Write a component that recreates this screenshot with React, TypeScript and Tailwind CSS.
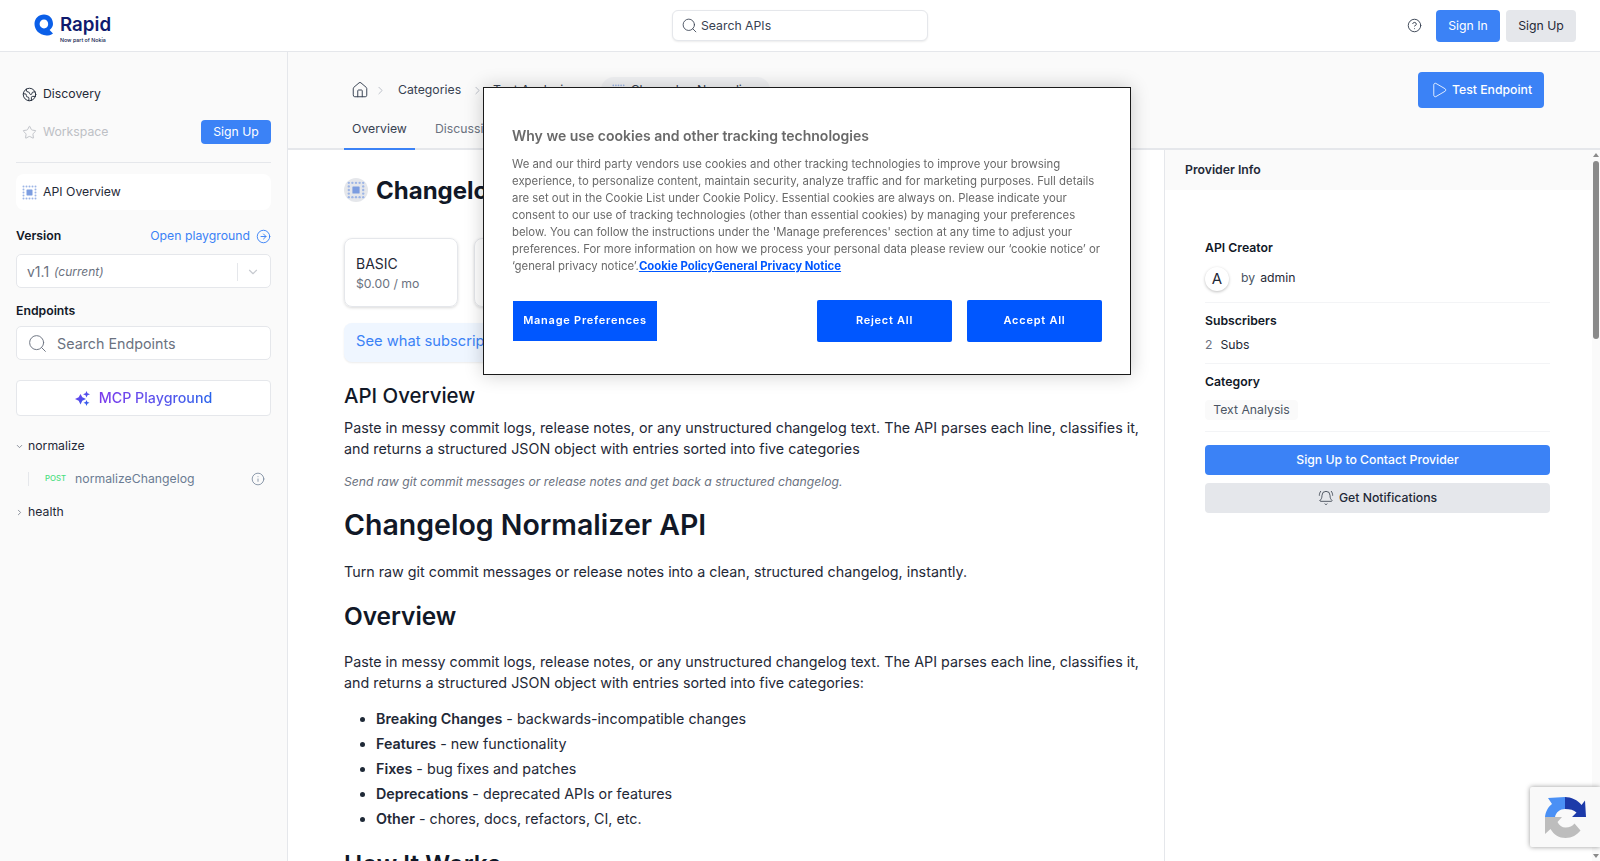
import { BellRing, ChevronDown, ChevronRight, CircleArrowRight, CircleHelp, Earth, House, Info, Play, Search, Star } from "lucide-react";

function ApiIcon({ size = 14 }: { size?: number }) {
  const dots = [2, 6, 10, 14, 18];
  return (
    <svg width={size} height={size} viewBox="0 0 20 20" fill="#9db5e6">
      {dots.map((x) =>
        dots.map((y) =>
          x === 2 || x === 18 || y === 2 || y === 18 ? <circle key={`${x}-${y}`} cx={x} cy={y} r="1.3" /> : null
        )
      )}
      <rect x="6" y="6" width="8" height="8" rx="0.6" fill="#7c9de0" />
    </svg>
  );
}

function Logo() {
  return (
    <div className="flex flex-col items-start pt-[7px]">
      <div className="flex items-center gap-[6px]">
        <svg width="20" height="22" viewBox="0 0 20 22">
          <path d="M10 0.5C4.6 0.5 0.5 4.6 0.5 10c0 5.6 4.4 11 12 11.5 1.6 0 4.6-.3 6.5-2l-3.4-3.4c2-1.7 3.4-3.8 3.4-6.1C19 4.6 15.4 0.5 10 0.5Zm0 5c2.4 0 4.2 2 4.2 4.5S12.4 14.4 10 14.4 5.6 12.4 5.6 10 7.6 5.5 10 5.5Z" fill="#0b5fe8" />
        </svg>
        <span className="text-[18.7px] leading-[22px] font-semibold text-[#0f1a6e]">Rapid</span>
      </div>
      <span className="ml-[26px] mt-[1px] text-[5.3px] leading-[7px] font-medium text-[#0f1a4e] whitespace-nowrap">Now part of Nokia</span>
    </div>
  );
}

function Recaptcha() {
  return (
    <svg width="41" height="41" viewBox="0 0 41 41">
      <path d="M0 20C0.5 15 3 10 7 7L3 1L20 0V12C15 12 11 15 10 20Z" fill="#4a90f5" />
      <path d="M20 0C26 0 33 3 36.5 8L40 3.5L41 20H27L31.5 15.5C29 13 25 12 20 12Z" fill="#1c3aa9" />
      <path d="M0 20V37L5.5 32C9 38 14 41 20.5 41C27 41 32 38 35.5 33.5L29.5 26.5C27.5 29 24.5 30.5 20.5 30.5C17 30.5 14 28.5 12.5 25L17 20Z" fill="#bdbdbd" />
    </svg>
  );
}

function Sidebar() {
  return (
    <aside className="w-[288px] shrink-0 bg-[#fafafa] border-r border-[#e5e7eb] px-4 pt-6 text-[12.25px] text-[#1f2937]">
      <div className="flex h-9 items-center gap-[6px] pl-[6px]">
        <Earth size={15} strokeWidth={1.5} />
        <span>Discovery</span>
      </div>
      <div className="mt-[2px] flex h-9 items-center gap-[6px] pl-[6px] text-[#bdc0c5]">
        <Star size={15} strokeWidth={1.5} />
        <span>Workspace</span>
        <button className="ml-auto h-6 w-[70px] rounded-[4px] bg-[#3b82f6] text-white">Sign Up</button>
      </div>
      <div className="mt-3 border-b border-[#e5e7eb]" />
      <div className="mt-[11px] flex h-9 items-center gap-[6px] rounded-lg bg-white pl-[6px]">
        <ApiIcon size={15} />
        <span>API Overview</span>
      </div>
      <div className="mt-4 flex h-5 items-center justify-between">
        <span className="font-semibold text-[#111827]">Version</span>
        <span className="flex items-center gap-[6px] text-[#3b82f6]">
          Open playground
          <CircleArrowRight size={15} strokeWidth={1.5} />
        </span>
      </div>
      <div className="mt-2 flex h-[34px] items-center rounded-[5px] border border-[#e5e7eb] bg-white pl-[10px] pr-[10px] pt-[1px] text-[#6b7280]">
        <span className="text-[14px]">v1.1</span>
        <span className="ml-[5px] text-[12px] italic">(current)</span>
        <span className="ml-auto h-[18px] border-l border-[#e5e7eb]" />
        <ChevronDown size={14} className="ml-[8px] text-[#c7cad0]" />
      </div>
      <div className="mt-[13px] flex h-5 items-center font-semibold text-[#111827]">Endpoints</div>
      <div className="mt-[5px] flex h-[34px] items-center gap-[9px] rounded-[5px] border border-[#e5e7eb] bg-white pl-[10px] text-[14.3px] text-[#6b7280]">
        <Search size={21} strokeWidth={1.1} />
        <span className="pt-[1px]">Search Endpoints</span>
      </div>
      <div className="mt-5 flex h-9 items-center justify-center gap-[9px] rounded-[4px] border border-[#e5e7eb] bg-white text-[14.25px] font-medium">
        <svg width="15" height="15" viewBox="0 0 15 15">
          <defs>
            <linearGradient id="mcp" x1="0" y1="0" x2="1" y2="1">
              <stop offset="0" stopColor="#7c3aed" />
              <stop offset="1" stopColor="#2563eb" />
            </linearGradient>
          </defs>
          <path d="M5.5 3 7.3 6.2 11 8 7.3 9.8 5.5 13.5 3.7 9.8 0 8 3.7 6.2ZM11.5 0l1 2.2 2.5 1-2.5 1-1 2.2-1-2.2L8 3.2l2.5-1ZM11.5 9l.9 1.9 2.1.9-2.1.9-.9 2.3-.9-2.3-2.1-.9 2.1-.9Z" fill="url(#mcp)" />
        </svg>
        <span className="bg-gradient-to-r from-[#7c3aed] to-[#2563eb] bg-clip-text text-transparent">MCP Playground</span>
      </div>
      <div className="mt-5 flex h-5 items-center gap-[4px]">
        <ChevronDown size={9} className="-ml-[1px] text-[#6b7280]" />
        <span>normalize</span>
      </div>
      <div className="ml-[12px] mt-[11px] flex h-6 items-center pr-[6px]">
        <span className="h-[14px] border-l border-[#e5e7eb]" />
        <span className="ml-[16px] text-[7.8px] font-medium text-[#4ade80]">POST</span>
        <span className="ml-[9px] text-[#6b7c93]">normalizeChangelog</span>
        <Info size={14} strokeWidth={1.3} className="ml-auto text-[#6b7c93]" />
      </div>
      <div className="mt-[11px] flex h-5 items-center gap-[4px]">
        <ChevronRight size={9} className="-ml-[1px] text-[#6b7280]" />
        <span>health</span>
      </div>
    </aside>
  );
}

function SubHeader() {
  return (
    <div className="relative h-[98px] shrink-0 border-b-2 border-[#e5e7eb] bg-[#fafafa] pl-14 pr-[56px]">
      <div className="flex h-[76px] items-start justify-between">
        <div className="mt-[20px] flex h-[36px] items-center text-[12.25px] text-[#374151]">
          <House size={18} strokeWidth={1.3} className="ml-[7px]" />
          <ChevronRight size={13} strokeWidth={1.2} className="ml-[5px] text-[#9ca3af]" />
          <span className="ml-[11px] pt-[1px]">Categories</span>
          <ChevronRight size={13} strokeWidth={1.2} className="ml-[10px] text-[#9ca3af]" />
          <span className="ml-[9px] pt-[1px]">Text Analysis</span>
          <span className="ml-[31px] flex h-[26px] w-[169px] items-center gap-[6px] rounded-full bg-[#f1f2f4] pl-[11px]">
            <ApiIcon size={13} />
            Changelog Normalizer
          </span>
        </div>
        <button className="mt-[20px] flex h-9 w-[126px] items-center justify-center gap-[4px] rounded-[4px] bg-[#3b82f6] text-[12.25px] font-medium text-white">
          <Play size={18} strokeWidth={1.1} />
          Test Endpoint
        </button>
      </div>
      <div className="absolute bottom-0 left-14 flex items-end text-[12.25px]">
        <span className="-mb-[2px] flex h-[34px] w-[71px] items-center justify-center border-b-2 border-[#3b82f6] pb-[5px] text-[#374151]">Overview</span>
        <span className="ml-[20px] flex h-[34px] items-center pb-[3px] text-[#6b7280]">Discussions</span>
      </div>
    </div>
  );
}

function Content() {
  return (
    <main className="flex-1 overflow-hidden bg-white pl-14 pr-[20px] text-[14.3px] leading-[21px] text-[#1f2937]">
      <div className="mt-[28px] flex h-6 items-center gap-[8px]">
        <span className="flex h-6 w-6 items-center justify-center rounded-full bg-[#e5e7eb]">
          <ApiIcon size={18} />
        </span>
        <h2 className="text-[24px] font-bold text-[#111827]">Changelog Normalizer</h2>
      </div>
      <div className="mt-[36px] flex gap-4">
        <div className="flex h-[69px] w-[114px] flex-col justify-center rounded-lg border border-[#e5e7eb] pl-[11px] pt-[3px] shadow-[0_1px_3px_rgba(0,0,0,0.15)]">
          <span className="text-[14px] leading-[20px] text-[#1f2937]">BASIC</span>
          <span className="text-[12.25px] leading-[20px] text-[#6b7280]">$0.00 / mo</span>
        </div>
        <div className="flex h-[69px] w-[114px] flex-col justify-center rounded-lg border border-[#e5e7eb] pl-[11px] shadow-[0_1px_3px_rgba(0,0,0,0.15)]">
          <span className="text-[14px] leading-[20px]">PRO</span>
        </div>
      </div>
      <div className="mt-4 flex h-[39px] w-[600px] items-center rounded-lg bg-[#eff6ff] pb-[2px] pl-[12px] text-[14.7px] text-[#3b82f6] shadow-[0_1px_2px_rgba(0,0,0,0.08)]">
        See what subscription plans include
      </div>
      <h3 className="mt-[21px] text-[20.4px] leading-[26px] font-medium text-[#111827]">API Overview</h3>
      <p className="mt-[8px]">
        Paste in messy commit logs, release notes, or any unstructured changelog text. The API parses each line, classifies it, and returns a structured JSON object with entries sorted into five categories
      </p>
      <p className="mt-[13px] text-[12.2px] leading-[20px] italic text-[#6b7280]">Send raw git commit messages or release notes and get back a structured changelog.</p>
      <h1 className="mt-[14px] text-[28.5px] leading-[38px] font-semibold text-[#111827]">Changelog Normalizer API</h1>
      <p className="mt-[17px]">Turn raw git commit messages or release notes into a clean, structured changelog, instantly.</p>
      <h2 className="mt-[18px] text-[24.4px] leading-[32px] font-semibold text-[#111827]">Overview</h2>
      <p className="mt-[19px]">
        Paste in messy commit logs, release notes, or any unstructured changelog text. The API parses each line, classifies it, and returns a structured JSON object with entries sorted into five categories:
      </p>
      <ul className="mt-[15px] list-disc pl-[32px]">
        <li className="mb-[4px]"><strong className="font-semibold">Breaking Changes</strong> - backwards-incompatible changes</li>
        <li className="mb-[4px]"><strong className="font-semibold">Features</strong> - new functionality</li>
        <li className="mb-[4px]"><strong className="font-semibold">Fixes</strong> - bug fixes and patches</li>
        <li className="mb-[4px]"><strong className="font-semibold">Deprecations</strong> - deprecated APIs or features</li>
        <li><strong className="font-semibold">Other</strong> - chores, docs, refactors, CI, etc.</li>
      </ul>
      <h2 className="mt-[19px] text-[24.4px] leading-[32px] font-semibold text-[#111827]">How It Works</h2>
    </main>
  );
}

function ProviderPanel() {
  return (
    <aside className="relative flex w-[436px] shrink-0 border-l border-[#e5e7eb] bg-white text-[12.25px] text-[#1f2937]">
      <div className="flex-1">
        <div className="flex h-10 items-center bg-[#fafafa] pl-[20px] font-semibold">Provider Info</div>
        <div className="pl-[40px] pr-[42px]">
          <div className="mt-[48px] flex h-5 items-center font-semibold text-[#111827]">API Creator</div>
          <div className="mt-[9px] flex h-6 items-center">
            <span className="flex h-6 w-6 items-center justify-center rounded-full bg-white text-[15px] shadow-[0_1px_3px_rgba(0,0,0,0.25)]">A</span>
            <span className="ml-3 pb-[1px] text-[#4b5563]">by</span>
            <span className="ml-[5px] pb-[1px]">admin</span>
          </div>
          <div className="mt-[11px] border-b border-[#f3f4f6]" />
          <div className="mt-2 flex h-5 items-center font-semibold text-[#111827]">Subscribers</div>
          <div className="mt-[4px] flex h-5 items-center">
            <span className="text-[#6b7280]">2</span>
            <span className="ml-[8px]">Subs</span>
          </div>
          <div className="mt-2 border-b border-[#f3f4f6]" />
          <div className="mt-2 flex h-5 items-center font-semibold text-[#111827]">Category</div>
          <div className="mt-2 flex h-5 w-[93px] items-center justify-center rounded-[4px] bg-[#fafafa] text-[#4b5563]">Text Analysis</div>
          <div className="mt-[11px] border-b border-[#f3f4f6]" />
          <button className="mt-[13px] flex h-[30px] w-full items-center justify-center rounded-[4px] bg-[#3b82f6] font-medium text-white">Sign Up to Contact Provider</button>
          <button className="mt-2 flex h-[30px] w-full items-center justify-center gap-[5px] rounded-[4px] bg-[#e5e7eb] font-medium">
            <BellRing size={16} strokeWidth={1.1} />
            Get Notifications
          </button>
        </div>
      </div>
      <div className="flex w-[8px] shrink-0 flex-col items-center bg-[#fafafa] pt-[3px] pb-[3px]">
        <span className="h-0 w-0 border-x-[3px] border-b-[4px] border-x-transparent border-b-[#8a8a8a]" />
        <span className="mt-[4px] h-[178px] w-[6px] rounded-full bg-[#8a8a8a]" />
        <span className="mt-auto h-0 w-0 border-x-[3px] border-t-[4px] border-x-transparent border-t-[#8a8a8a]" />
      </div>
    </aside>
  );
}

function CookieModal() {
  return (
    <div className="fixed left-[483px] top-[87px] h-[288px] w-[648px] border border-[#1a1a1a] bg-white px-[28px] text-[#696969] shadow-[0_0_18px_rgba(0,0,0,0.2)]">
      <h2 className="mt-[38px] text-[14px] leading-[20px] font-semibold">Why we use cookies and other tracking technologies</h2>
      <p className="mt-[10px] text-[11.38px] leading-[17px]">
        We and our third party vendors use cookies and other tracking technologies to improve your browsing experience, to personalize content, maintain security, analyze traffic and for marketing purposes. Full details are set out in the Cookie List under Cookie Policy. Essential cookies are always on. Please indicate your consent to our use of tracking technologies (other than essential cookies) by managing your preferences below. You can follow the instructions under the 'Manage preferences' section at any time to adjust your preferences. For more information on how we process your personal data please review our ‘cookie notice’ or ‘general privacy notice’.
        <span className="font-bold text-[#0057ff] underline">Cookie Policy</span>
        <span className="font-bold text-[#0057ff] underline">General Privacy Notice</span>
      </p>
      <div className="mt-[25px] flex items-center text-[11px] font-semibold tracking-[0.75px] text-white">
        <button className="ml-[1px] h-10 w-[144px] bg-[#0057ff] pb-[2px]">Manage Preferences</button>
        <button className="ml-auto h-[42px] w-[135px] rounded-[2px] bg-[#0057ff] pb-[2px]">Reject All</button>
        <button className="ml-[15px] h-[42px] w-[135px] rounded-[2px] bg-[#0057ff] pb-[2px]">Accept All</button>
      </div>
    </div>
  );
}

export default function App() {
  return (
    <div className="flex h-[861px] w-[1600px] flex-col overflow-hidden bg-white font-['Inter',sans-serif]">
      <header className="flex h-[52px] shrink-0 items-center justify-between border-b border-[#e5e7eb] bg-white pl-[34px] pr-[24px]">
        <Logo />
        <div className="absolute left-[672px] top-[10px] flex h-[31px] w-[256px] items-center gap-[3px] rounded-[6px] border border-[#e5e7eb] bg-white pl-[8px] text-[12.25px] text-[#374151] shadow-[0_1px_2px_rgba(0,0,0,0.08)]">
          <Search size={17} strokeWidth={1.2} />
          <span className="pt-[1px]">Search APIs</span>
        </div>
        <div className="flex items-center text-[12.25px]">
          <CircleHelp size={15} strokeWidth={1.5} className="text-[#374151]" />
          <button className="ml-[14px] h-8 w-16 rounded-[4px] bg-[#3b82f6] pt-[1px] text-white">Sign In</button>
          <button className="ml-[6px] h-8 w-[70px] rounded-[4px] bg-[#e5e7eb] pt-[1px] text-[#1f2937]">Sign Up</button>
        </div>
      </header>
      <div className="flex min-h-0 flex-1">
        <Sidebar />
        <div className="flex min-w-0 flex-1 flex-col">
          <SubHeader />
          <div className="flex min-h-0 flex-1">
            <Content />
            <ProviderPanel />
          </div>
        </div>
      </div>
      <CookieModal />
      <div className="fixed left-[1530px] top-[787px] flex h-[60px] w-[70px] items-center justify-start rounded-l-[2px] bg-[#f9f9f9] pl-[15px] shadow-[0_0_5px_rgba(0,0,0,0.4)]">
        <Recaptcha />
      </div>
    </div>
  );
}
